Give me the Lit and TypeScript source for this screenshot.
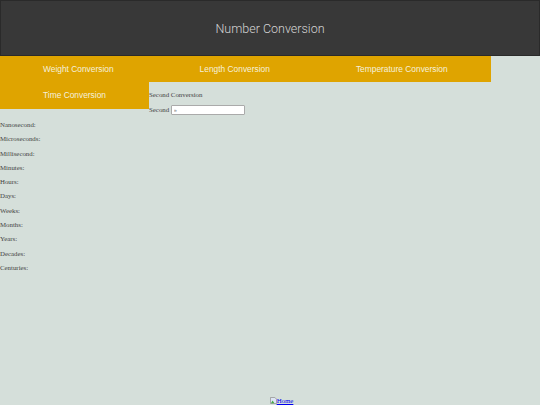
import { LitElement, html, css } from "lit";
import { customElement } from "lit/decorators.js";

const LABELS = ["Nanosecond:", "Microseconds:", "Millisecond:", "Minutes:", "Hours:", "Days:", "Weeks:", "Months:", "Years:", "Decades:", "Centuries:"];

@customElement("app-root")
export class AppRoot extends LitElement {
  static styles = css`
    :host { display: flex; flex-direction: column; width: 540px; height: 405px; background: #d5dfda; font-family: "Liberation Serif", serif; font-size: 6.85px; color: #444; overflow: hidden; opacity: 0.995; }
    .head { box-sizing: border-box; height: 55.5px; padding-top: 2px; background: #383838; border: 1px solid #2a2a2a; display: flex; align-items: center; justify-content: center; color: #d4d4d4; font: 300 12.5px Roboto, sans-serif; }
    .nav { display: flex; }
    .item { box-sizing: border-box; height: 26.6px; padding: 0 43px; background: #dfa400; color: #f5f0dc; font: 8.4px "Liberation Sans", Arial, sans-serif; display: flex; align-items: center; white-space: nowrap; }
    .item.time { padding-bottom: 1px; }
    .body { flex: 1; display: flex; }
    .left { display: flex; flex-direction: column; align-items: flex-start; }
    .labels { display: flex; flex-direction: column; gap: 5px; padding-top: 11.2px; }
    .labels div { height: 9.32px; line-height: 9.32px; }
    .right { display: flex; flex-direction: column; gap: 6px; padding-top: 8px; }
    .t { line-height: 10px; }
    .row { display: flex; align-items: center; gap: 1.5px; line-height: 10px; margin-top: -1px; }
    input { box-sizing: border-box; width: 74px; height: 10px; padding: 0 2px; border: 1px solid #aaa; border-radius: 1px; background: #fff; font: 5.5px "Liberation Sans", sans-serif; color: #777; outline: none; }
    .foot { display: flex; justify-content: center; align-items: center; height: 9px; padding-left: 23px; margin-top: auto; }
    a { color: #00e; text-decoration: underline; display: flex; align-items: center; }
    svg { width: 7px; height: 7px; flex: none; }
  `;
  render() {
    return html`
      <div class="head">Number Conversion</div>
      <div class="nav">
        <div class="item">Weight Conversion</div>
        <div class="item">Length Conversion</div>
        <div class="item">Temperature Conversion</div>
      </div>
      <div class="body">
        <div class="left">
          <div class="item time">Time Conversion</div>
          <div class="labels">${LABELS.map((l) => html`<div>${l}</div>`)}</div>
        </div>
        <div class="right">
          <div class="t">Second Conversion</div>
          <div class="row">Second <input value="»" /></div>
        </div>
      </div>
      <div class="foot"><a href="#"><svg viewBox="0 0 8 8"><path d="M.5.5h5l2 2v5h-7z" fill="#dde6f5" stroke="#999"/><path d="M1 7l2-3 2 3z" fill="#4a4"/></svg>Home</a></div>
    `;
  }
}
